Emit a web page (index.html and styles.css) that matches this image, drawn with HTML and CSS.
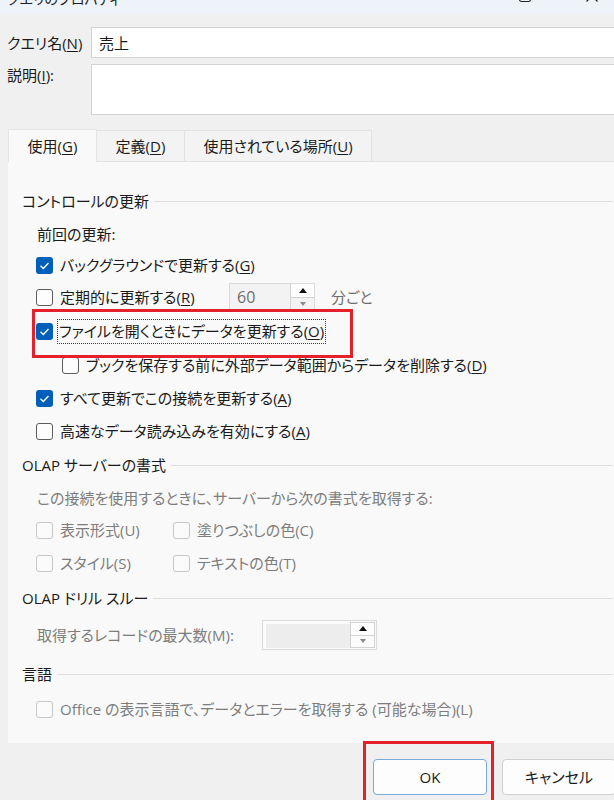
FILE: index.html
```html
<!DOCTYPE html>
<html lang="ja">
<head>
<meta charset="utf-8">
<title>クエリのプロパティ</title>
<link rel="stylesheet" href="styles.css">
</head>
<body>
<div class="dialog">
  <div class="titlebar">
    <span class="title">クエリのプロパティ</span>
    <span class="spacer"></span>
    <svg class="win-btn win-max" width="14" height="14" viewBox="0 0 14 14"><rect x="1.5" y="1.5" width="11" height="11" rx="2" fill="none" stroke="#222" stroke-width="1.2"/></svg>
    <svg class="win-btn win-close" width="14" height="14" viewBox="0 0 14 14"><path d="M1.5 1.5 L12.5 12.5 M12.5 1.5 L1.5 12.5" stroke="#222" stroke-width="1.2" fill="none"/></svg>
  </div>

  <div class="fields">
    <div class="field-row name-row">
      <span class="field-label">クエリ名(<u>N</u>)</span>
      <div class="input">売上</div>
    </div>
    <div class="field-row desc-row">
      <span class="field-label desc-label">説明(<u>I</u>):</span>
      <div class="input textarea"></div>
    </div>
  </div>

  <div class="tabs">
    <div class="tab tab-active tab-use">使用(<u>G</u>)</div>
    <div class="tab tab-def">定義(<u>D</u>)</div>
    <div class="tab tab-where">使用されている場所(<u>U</u>)</div>
  </div>

  <div class="panel">
    <div class="group-head h34">コントロールの更新</div>
    <div class="row h32 plain">前回の更新:</div>
    <div class="row h30">
      <span class="cb checked"><svg width="17" height="17" viewBox="0 0 17 17"><polyline points="4.5,8.8 7.3,11.5 12.5,6" fill="none" stroke="#fff" stroke-width="1.3"/></svg></span>
      <span class="cb-text">バックグラウンドで更新する(<u>G</u>)</span>
    </div>
    <div class="row h34">
      <span class="cb"></span>
      <span class="cb-text periodic-label">定期的に更新する(<u>R</u>)</span>
      <div class="spin">
        <span class="spin-value">60</span>
        <span class="spin-btns">
          <span class="spin-up"><svg width="8" height="5" viewBox="0 0 8 5"><polygon points="0,5 4,0 8,5" fill="#111"/></svg></span>
          <span class="spin-down"><svg width="6" height="4" viewBox="0 0 6 4"><polygon points="0,0 6,0 3,4" fill="#8a8a8a"/></svg></span>
        </span>
      </div>
      <span class="unit">分ごと</span>
    </div>
    <div class="row h35">
      <span class="cb checked"><svg width="17" height="17" viewBox="0 0 17 17"><polyline points="4.5,8.8 7.3,11.5 12.5,6" fill="none" stroke="#fff" stroke-width="1.3"/></svg></span>
      <span class="cb-text focus">ファイルを開くときにデータを更新する(<u>O</u>)</span>
    </div>
    <div class="row h33 indent">
      <span class="cb"></span>
      <span class="cb-text">ブックを保存する前に外部データ範囲からデータを削除する(<u>D</u>)</span>
    </div>
    <div class="row h32">
      <span class="cb checked"><svg width="17" height="17" viewBox="0 0 17 17"><polyline points="4.5,8.8 7.3,11.5 12.5,6" fill="none" stroke="#fff" stroke-width="1.3"/></svg></span>
      <span class="cb-text">すべて更新でこの接続を更新する(<u>A</u>)</span>
    </div>
    <div class="row h34">
      <span class="cb"></span>
      <span class="cb-text">高速なデータ読み込みを有効にする(<u>A</u>)</span>
    </div>

    <div class="group-head h34">OLAP サーバーの書式</div>
    <div class="row h32 plain disabled">この接続を使用するときに、サーバーから次の書式を取得する:</div>
    <div class="row h32 disabled">
      <span class="opt"><span class="cb dis"></span><span class="cb-text">表示形式(U)</span></span>
      <span class="opt"><span class="cb dis"></span><span class="cb-text">塗りつぶしの色(C)</span></span>
    </div>
    <div class="row h34 disabled">
      <span class="opt"><span class="cb dis"></span><span class="cb-text">スタイル(S)</span></span>
      <span class="opt"><span class="cb dis"></span><span class="cb-text">テキストの色(T)</span></span>
    </div>

    <div class="group-head h36">OLAP ドリル スルー</div>
    <div class="row h38 plain disabled">
      <span class="max-label">取得するレコードの最大数(M):</span>
      <div class="spin spin2">
        <span class="spin-value"></span>
        <span class="spin-btns">
          <span class="spin-up"><svg width="8" height="5" viewBox="0 0 8 5"><polygon points="0,5 4,0 8,5" fill="#111"/></svg></span>
          <span class="spin-down"><svg width="6" height="4" viewBox="0 0 6 4"><polygon points="0,0 6,0 3,4" fill="#8a8a8a"/></svg></span>
        </span>
      </div>
    </div>

    <div class="group-head h40">言語</div>
    <div class="row h30 disabled">
      <span class="cb dis"></span>
      <span class="cb-text">Office の表示言語で、データとエラーを取得する (可能な場合)(L)</span>
    </div>
  </div>

  <div class="footer">
    <div class="btn btn-ok">OK</div>
    <div class="btn">キャンセル</div>
  </div>

  <div class="hl hl-refresh"></div>
  <div class="hl hl-ok"></div>
</div>
</body>
</html>
```

FILE: styles.css
```css
html, body {
  margin: 0;
  padding: 0;
  overflow: hidden;
  background: #f0f0f0;
}

.dialog {
  position: relative;
  width: 630px;
  height: 800px;
  overflow: hidden;
  background: #f0f0f0;
  font-family: "Open Sans", "Noto Sans CJK JP", sans-serif;
  font-feature-settings: "palt";
  font-size: 15px;
  line-height: 22px;
  color: #1b1b1b;
}

u {
  text-decoration: underline;
  text-underline-offset: 2px;
}

/* Title bar */
.titlebar {
  height: 15px;
  background: #eef3f9;
  display: flex;
  align-items: flex-start;
  overflow: hidden;
  padding-left: 7px;
}
.title {
  margin-top: -11px;
  line-height: 20px;
  font-size: 14px;
  color: #222;
}
.spacer { flex: 1; }
.win-btn { margin-top: -11px; }
.win-max { margin-right: 53px; }
.win-close { margin-right: 31px; }

/* Name / description */
.fields {
  padding: 12px 0 0 7px;
}
.field-row {
  display: flex;
}
.name-row {
  height: 31px;
  align-items: center;
}
.desc-row {
  height: 51px;
  margin-top: 6px;
}
.field-label {
  width: 84px;
  flex: none;
  line-height: 22px;
}
.input {
  flex: 1;
  box-sizing: border-box;
  height: 100%;
  background: #fff;
  border: 1px solid #d3d3d3;
  padding-left: 7px;
  display: flex;
  align-items: center;
  font-size: 15px;
  margin-right: -4px;
}
.textarea {
  align-items: flex-start;
}

/* Tabs */
.tabs {
  display: flex;
  align-items: flex-end;
  height: 32px;
  margin-top: 14px;
  padding-left: 8px;
  position: relative;
  z-index: 2;
}
.tab {
  box-sizing: border-box;
  height: 31px;
  display: flex;
  align-items: center;
  justify-content: center;
  background: #f3f3f3;
  border: 1px solid #e2e2e2;
  border-bottom: none;
  margin-left: -1px;
}
.tab-use { width: 89px; margin-left: 0; }
.tab-def { width: 89px; }
.tab-where { width: 188px; }
.tab-active {
  height: 33px;
  margin-bottom: -1px;
  background: #f9f9f9;
  border-color: #e5e5e5;
  position: relative;
  z-index: 3;
}

/* Panel */
.panel {
  margin-left: 8px;
  background: #f9f9f9;
  border-top: 1px solid #e3e3e3;
  padding: 22px 17px 19px 14px;
  display: flex;
  flex-direction: column;
}
.group-head {
  display: flex;
  align-items: center;
}
.group-head::after {
  content: "";
  flex: 1;
  height: 1px;
  background: #dedede;
  margin-left: 5px;
}
.row {
  display: flex;
  align-items: center;
  padding-left: 14px;
  white-space: nowrap;
}
.row.plain { padding-left: 15px; }
.row.indent { padding-left: 40px; }
.h30 { height: 30px; }
.h32 { height: 32px; }
.h33 { height: 33px; }
.h34 { height: 34px; }
.h35 { height: 35px; }
.h36 { height: 36px; }
.h38 { height: 38px; }
.h40 { height: 40px; }

.disabled { color: #7d7d7d; }

.cb {
  box-sizing: border-box;
  width: 17px;
  height: 17px;
  flex: none;
  border: 1px solid #5c5c5c;
  border-radius: 3px;
  background: #fdfdfd;
  display: inline-flex;
}
.cb.checked {
  border: none;
  background: #005fb8;
}
.cb.dis {
  border-color: #c6c6c6;
  background: #fbfbfb;
}
.cb-text {
  margin-left: 7px;
  line-height: 23px;
}
.cb-text.focus {
  margin-left: 4px;
  border: 1px dotted #3a3a3a;
  padding: 0 1px;
}
.periodic-label {
  width: 169px;
}
.opt {
  display: flex;
  align-items: center;
  width: 137px;
}

/* Spin boxes */
.spin {
  box-sizing: border-box;
  width: 86px;
  height: 28px;
  display: flex;
  border: 1px solid #dadada;
  background: #f3f3f3;
}
.spin-value {
  flex: 1;
  padding-left: 7px;
  display: flex;
  align-items: center;
  color: #6e6e6e;
  font-size: 16px;
}
.spin-btns {
  width: 23px;
  display: flex;
  flex-direction: column;
  border-left: 1px solid #d2d2d2;
}
.spin-up {
  flex: 1;
  background: #fdfdfd;
  border-bottom: 1px solid #d2d2d2;
  display: flex;
  align-items: center;
  justify-content: center;
}
.spin-down {
  flex: 1;
  display: flex;
  align-items: center;
  justify-content: center;
}
.unit {
  margin-left: 16px;
  color: #6e6e6e;
}
.max-label {
  width: 225px;
}
.spin2 {
  width: 115px;
  height: 30px;
  background: #fbfbfb;
  padding: 3px 1px 1px 3px;
}
.spin2 .spin-value {
  background: #ededed;
}
.spin2 .spin-btns {
  border: 1px solid #d2d2d2;
  margin-top: -2px;
}

/* Footer buttons */
.footer {
  display: flex;
  justify-content: flex-end;
  gap: 15px;
  padding: 16px 14px 0 0;
}
.btn {
  box-sizing: border-box;
  width: 114px;
  height: 36px;
  border: 1px solid #d0d0d0;
  border-radius: 4px;
  background: #fdfdfd;
  display: flex;
  align-items: center;
  justify-content: center;
  font-size: 15px;
}
.btn-ok {
  border: 1px solid #7aa9da;
}

/* Red highlight overlays */
.hl {
  position: absolute;
  box-sizing: border-box;
  border: 3px solid #e6202b;
  z-index: 5;
  pointer-events: none;
}
.hl-refresh {
  left: 32px;
  top: 309px;
  width: 321px;
  height: 49px;
}
.hl-ok {
  left: 363px;
  top: 741px;
  width: 131px;
  height: 70px;
}
```
